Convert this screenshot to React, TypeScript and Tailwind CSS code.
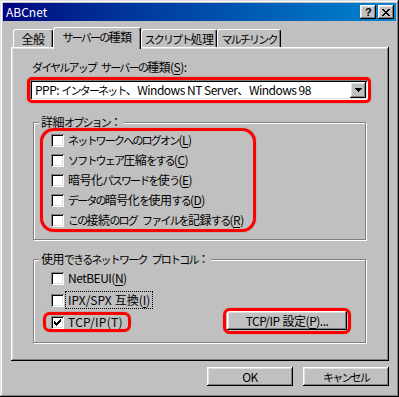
import React from "react";

const RAISED =
  "shadow-[inset_-1px_-1px_#000,inset_1px_1px_#fff,inset_-2px_-2px_#808080,inset_2px_2px_#dfdfdf]";
const SUNKEN =
  "shadow-[inset_1px_1px_#808080,inset_-1px_-1px_#fff,inset_2px_2px_#000,inset_-2px_-2px_#dfdfdf]";

const SPLIT = /([\u3041-\u30ff]+| )/;
const IS_KANA = /^[\u3041-\u30ff]+$/;

function J({ t, narrow }: { t: string; narrow?: boolean }) {
  return (
    <>
      {t.split(SPLIT).map((s, i) => {
        if (s === " ")
          return <span key={i} className={narrow ? "inline-block w-[3px]" : "inline-block w-[5px]"} />;
        if (IS_KANA.test(s))
          return (
            <span key={i} className="text-[11px] tracking-[-1.8px]">
              {s}
            </span>
          );
        return <React.Fragment key={i}>{s}</React.Fragment>;
      })}
    </>
  );
}

function Acc({ k }: { k: string }) {
  return (
    <>
      (<u className="underline underline-offset-[2px]">{k}</u>)
    </>
  );
}

function Checkbox({ checked }: { checked?: boolean }) {
  return (
    <span className={`relative block w-[13px] h-[13px] shrink-0 bg-white ${SUNKEN}`}>
      {checked && (
        <svg
          className="absolute left-0 top-0"
          width="13"
          height="13"
          viewBox="0 0 13 13"
          shapeRendering="crispEdges"
        >
          <path
            d="M9 3h1v1h-1zM8 4h2v1h-2zM3 5h1v1h-1zM7 5h3v1h-3zM3 6h2v1h-2zM6 6h3v1h-3zM3 7h5v1h-5zM4 8h3v1h-3zM5 9h1v1h-1z"
            fill="#000"
          />
        </svg>
      )}
    </span>
  );
}

function Red({ className }: { className: string }) {
  return (
    <span
      className={`pointer-events-none absolute border-[3px] border-[#ff0000] shadow-[0_0_1px_#c00000] ${className}`}
    />
  );
}

function Tab({
  children,
  w,
  selected,
}: {
  children: React.ReactNode;
  w: string;
  selected?: boolean;
}) {
  if (selected) {
    return (
      <div
        className={`relative z-10 ${w} h-[22px] -mb-[2px] bg-[#c0c0c0] border-l border-t border-white border-r border-r-black rounded-t-[3px] shadow-[inset_-1px_0_#808080] flex items-start justify-center pt-[2px] leading-[14px] whitespace-nowrap`}
      >
        {children}
      </div>
    );
  }
  return (
    <div
      className={`${w} h-[18px] bg-[#c0c0c0] border-l border-t border-white border-r border-r-black rounded-t-[3px] shadow-[inset_-1px_0_#808080] flex items-center justify-center leading-[14px] whitespace-nowrap overflow-hidden`}
    >
      {children}
    </div>
  );
}

function Group({
  title,
  className,
  children,
}: {
  title: string;
  className: string;
  children: React.ReactNode;
}) {
  return (
    <div
      className={`relative border border-[#808080] shadow-[inset_1px_1px_#fff,1px_1px_#fff] ${className}`}
    >
      <span className="absolute left-[5px] -top-[8px] px-[2px] bg-[#c0c0c0] leading-[14px] whitespace-nowrap">
        <J t={title} />
      </span>
      {children}
    </div>
  );
}

function Row({
  children,
  checked,
  h,
}: {
  children: React.ReactNode;
  checked?: boolean;
  h: string;
}) {
  return (
    <div className={`flex items-center ${h}`}>
      <div className="flex items-center gap-[4px]">
        <Checkbox checked={checked} />
        <span className="leading-[14px] whitespace-nowrap">{children}</span>
      </div>
    </div>
  );
}

export default function App() {
  return (
    <div
      lang="ja"
      className={`w-[399px] h-[397px] bg-[#c0c0c0] p-[3px] flex flex-col text-[12px] tracking-[-0.5px] text-black font-['Noto_Sans_CJK_JP','Noto_Sans_CJK_SC',sans-serif] shadow-[inset_-1px_-1px_#000,inset_1px_1px_#dfdfdf,inset_-2px_-2px_#808080,inset_2px_2px_#fff]`}
    >
      {/* Title bar */}
      <div className="h-[18px] shrink-0 flex items-center pl-[3px] pr-[2px] bg-linear-to-r from-[#000080] to-[#1084d0]">
        <span className="text-white text-[12px] leading-[14px] tracking-normal">ABCnet</span>
        <div className="ml-auto flex gap-[2px]">
          <div
            className={`w-[16px] h-[14px] bg-[#c0c0c0] ${RAISED} flex items-center justify-center font-['Liberation_Sans',sans-serif] font-bold text-[11px] leading-[11px]`}
          >
            ?
          </div>
          <div className={`w-[16px] h-[14px] bg-[#c0c0c0] ${RAISED} flex items-center justify-center`}>
            <svg width="8" height="7" viewBox="0 0 8 7" shapeRendering="crispEdges">
              <path
                d="M0 0h2v1h-2zM6 0h2v1h-2zM1 1h2v1h-2zM5 1h2v1h-2zM2 2h4v1h-4zM3 3h2v1h-2zM2 4h4v1h-4zM1 5h2v1h-2zM5 5h2v1h-2zM0 6h2v1h-2zM6 6h2v1h-2z"
                fill="#000"
              />
            </svg>
          </div>
        </div>
      </div>

      {/* Body */}
      <div className="flex flex-col pl-[8px] pr-[7px] pt-[6px]">
        {/* Tabs */}
        <div className="flex items-end pl-[2px] h-[20px]">
          <Tab w="w-[40px]">全般</Tab>
          <Tab w="w-[88px]" selected>
            <J t="サーバーの種類" />
          </Tab>
          <Tab w="w-[76px]">
            <J t="スクリプト処理" />
          </Tab>
          <Tab w="w-[64px]">
            <J t="マルチリンク" />
          </Tab>
        </div>

        {/* Panel */}
        <div className={`h-[314px] bg-[#c0c0c0] ${RAISED} flex flex-col pl-[19px] pr-[21px] pt-[13px]`}>
          <div className="pl-[2px] leading-[14px] whitespace-nowrap">
            <J t="ダイヤルアップ サーバーの種類" />
            <Acc k="S" />:
          </div>

          {/* Dropdown */}
          <div className={`relative mt-[6px] h-[20px] bg-white ${SUNKEN} flex items-center`}>
            <span className="pl-[5px] leading-[14px] whitespace-nowrap">
              PPP: <J t="インターネット、" />
              Windows NT Server<J t="、" />
              Windows 98
            </span>
            <div
              className={`ml-auto mr-[2px] w-[16px] h-[16px] bg-[#c0c0c0] ${RAISED} flex items-center justify-center`}
            >
              <svg width="7" height="4" viewBox="0 0 7 4" shapeRendering="crispEdges">
                <path d="M0 0h7v1h-7zM1 1h5v1h-5zM2 2h3v1h-3zM3 3h1v1h-1z" fill="#000" />
              </svg>
            </div>
            <Red className="-inset-[3px] rounded-[5px]" />
          </div>

          {/* Group 1 */}
          <Group title="詳細オプション：" className="mt-[22px] ml-[3px] mr-[2px] pt-[7px] pb-[9px] pl-[17px]">
            <div className="relative w-fit">
              <Row h="h-[20px]">
                <J t="ネットワークへのログオン" />
                <Acc k="L" />
              </Row>
              <Row h="h-[20px]">
                <J t="ソフトウェア圧縮をする" />
                <Acc k="C" />
              </Row>
              <Row h="h-[20px]">
                <J t="暗号化パスワードを使う" />
                <Acc k="E" />
              </Row>
              <Row h="h-[20px]">
                <J t="データの暗号化を使用する" />
                <Acc k="D" />
              </Row>
              <Row h="h-[20px]">
                <J t="この接続のログ ファイルを記録する" />
                <Acc k="R" />
              </Row>
              <Red className="-top-[2px] -bottom-[2px] -left-[11px] -right-[12px] rounded-[14px]" />
            </div>
          </Group>

          {/* Group 2 */}
          <Group
            title="使用できるネットワーク プロトコル："
            className="mt-[19px] ml-[3px] mr-[2px] pt-[7px] pb-[9px] pl-[17px] pr-[18px]"
          >
            <Row h="h-[22px]">
              NetBEUI<Acc k="N" />
            </Row>
            <div className="flex items-center h-[22px]">
              <div className="flex items-center gap-[3px]">
                <Checkbox />
                <span className="leading-[14px] whitespace-nowrap px-[1px] tracking-normal outline-1 outline-dotted outline-black outline-offset-[1px]">
                  <J t="IPX/SPX 互換" narrow />
                  <Acc k="I" />
                </span>
              </div>
            </div>
            <div className="flex items-center justify-between h-[22px]">
              <div className="relative flex items-center gap-[4px] h-[16px]">
                <Checkbox checked />
                <span className="leading-[14px] whitespace-nowrap tracking-[0.3px]">
                  TCP/IP<Acc k="T" />
                </span>
                <Red className="-top-[2px] -bottom-[2px] -left-[8px] -right-[8px] rounded-[7px]" />
              </div>
              <div className="relative -mt-[3px]">
                <button
                  className={`w-[120px] h-[19px] bg-[#c0c0c0] ${RAISED} flex items-center justify-center leading-[14px] whitespace-nowrap`}
                >
                  <J t="TCP/IP 設定" narrow />
                  <Acc k="P" />
                  ...
                </button>
                <Red className="-left-[4px] -right-[4px] -top-[3px] -bottom-[4px] rounded-[7px]" />
              </div>
            </div>
          </Group>
        </div>

        {/* Buttons */}
        <div className="flex justify-end gap-[10px] mt-[6px]">
          <button className={`w-[86px] h-[19px] bg-[#c0c0c0] ${RAISED} flex items-center justify-center leading-[14px]`}>
            OK
          </button>
          <button className={`w-[86px] h-[19px] bg-[#c0c0c0] ${RAISED} flex items-center justify-center leading-[14px]`}>
            <J t="キャンセル" />
          </button>
        </div>
      </div>
    </div>
  );
}
